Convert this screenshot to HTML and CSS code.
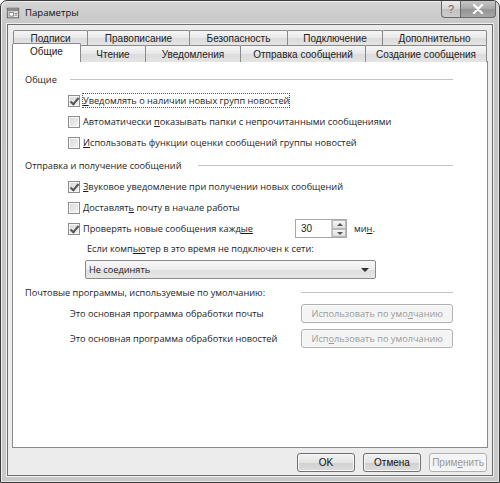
FILE: index.html
```html
<!DOCTYPE html>
<html lang="ru">
<head>
<meta charset="utf-8">
<title>Параметры</title>
<link rel="stylesheet" href="styles.css">
</head>
<body>
<div class="window">
  <div class="titlebar">
    <svg class="app-icon" width="14" height="14" viewBox="0 0 16 16">
      <rect x="1.5" y="2.5" width="13" height="11" fill="#e8e8e8" stroke="#555"/>
      <rect x="2" y="3" width="12" height="3" fill="#8a8a8a"/>
      <rect x="3.5" y="7.5" width="5" height="4" fill="#fff" stroke="#777"/>
      <rect x="10" y="8" width="3" height="1" fill="#777"/>
      <rect x="10" y="10" width="3" height="1" fill="#777"/>
    </svg>
    <span class="title">Параметры</span>
    <div class="caption-btns">
      <span class="cap-btn help">?</span>
      <span class="cap-btn close">
        <svg width="12" height="10" viewBox="0 0 12 10"><path d="M2 1 L10 9 M10 1 L2 9" stroke="#fff" stroke-width="2.4" stroke-linecap="round"/></svg>
      </span>
    </div>
  </div>
  <div class="client">
    <div class="tabs">
      <div class="tab-row row-back">
        <span class="tab">Подписи</span>
        <span class="tab">Правописание</span>
        <span class="tab">Безопасность</span>
        <span class="tab">Подключение</span>
        <span class="tab">Дополнительно</span>
      </div>
      <div class="tab-row row-front">
        <span class="tab active">Общие</span>
        <span class="tab">Чтение</span>
        <span class="tab">Уведомления</span>
        <span class="tab">Отправка сообщений</span>
        <span class="tab">Создание сообщения</span>
      </div>
    </div>
    <div class="panel">
      <div class="group-head h1"><span>Общие</span><i class="rule"></i></div>
      <div class="check-row"><span class="cb checked"></span><span class="focus"><u>У</u>ведомлять о наличии новых групп новостей</span></div>
      <div class="check-row"><span class="cb"></span><span>Автоматически <u>п</u>оказывать папки с непрочитанными сообщениями</span></div>
      <div class="check-row"><span class="cb"></span><span><u>И</u>спользовать функции оценки сообщений группы новостей</span></div>

      <div class="group-head h2"><span>Отправка и получение сообщений</span><i class="rule"></i></div>
      <div class="check-row"><span class="cb checked"></span><span><u>З</u>вуковое уведомление при получении новых сообщений</span></div>
      <div class="check-row"><span class="cb"></span><span>Доставлят<u>ь</u> почту в начале работы</span></div>
      <div class="check-row spin-row">
        <span class="cb checked"></span><span class="spin-label">Проверять новые сообщения кажд<u>ые</u></span>
        <span class="spin"><span class="spin-val">30</span><span class="spin-arrows"><span class="arr up"></span><span class="arr down"></span></span></span>
        <span class="unit">ми<u>н</u>.</span>
      </div>
      <div class="sub-label">Если комп<u>ью</u>тер в это время не подключен к сети:</div>
      <div class="select"><span>Не соединять</span><span class="caret"></span></div>

      <div class="group-head h3"><span>Почтовые программы, используемые по умолчанию:</span><i class="rule"></i></div>
      <div class="default-row r1"><span class="dlabel">Это основная программа обработки почты</span><span class="btn disabled">Использовать по умо<u>л</u>чанию</span></div>
      <div class="default-row r2"><span class="dlabel">Это основная программа обработки новостей</span><span class="btn disabled">Исп<u>о</u>льзовать по умолчанию</span></div>
    </div>
    <div class="footer">
      <span class="btn">OK</span>
      <span class="btn">Отмена</span>
      <span class="btn disabled">Прим<u>е</u>нить</span>
    </div>
  </div>
</div>
</body>
</html>
```
FILE: styles.css
```css
* { box-sizing: border-box; }
html, body { margin: 0; padding: 0; background: #fff; }
body { width: 500px; height: 483px; overflow: hidden; font-family: "Open Sans", "Noto Sans", sans-serif; color: #1c1c1c; }

.window {
  width: 500px; height: 483px;
  border: 1px solid #3c3c3c;
  border-radius: 7px 7px 0 0;
  background: linear-gradient(#d4d4d4, #c4c4c4 30px, #c9c9c9);
  padding: 0 6px 6px 6px;
  display: flex; flex-direction: column;
  box-shadow: inset 1px 1px 0 #eee, inset -1px -1px 0 #e6e6e6;
}

.titlebar {
  height: 23px; display: flex; align-items: center; position: relative;
}
.app-icon { margin-left: -1px; margin-right: 5px; }
.title { font-size: 9.6px; color: #111; }
.caption-btns { margin-left: auto; display: flex; align-self: flex-start; margin-right: -3px; }
.cap-btn {
  height: 17px; display: flex; align-items: center; justify-content: center;
  border: 1px solid #6a6a6a; border-top: none;
  background: linear-gradient(#ececec, #d4d4d4 50%, #c2c2c2 51%, #cccccc);
  font-family: "Liberation Sans", sans-serif; font-size: 11px; color: #666;
}
.cap-btn.help { width: 19px; border-radius: 0 0 0 4px; border-right: none; }
.cap-btn.close { width: 36px; border-radius: 0 0 4px 0; background: linear-gradient(#c6c6c6, #a8a8a8 50%, #949494 51%, #a6a6a6); }

.client {
  flex: 1;
  background: #ececec;
  border: 1px solid #6e6e6e;
  box-shadow: 0 0 0 1px #efefef;
  padding: 5px 4px 0 4px;
  display: flex; flex-direction: column;
}

.tab-row { display: grid; height: 15px; }
.row-back { grid-template-columns: 75px 102px 98px 95px 104px; margin-left: 1px; margin-right: 1px; }
.row-front { grid-template-columns: 69px 65px 95px 125px 121px; margin-right: 1px; height: 16px; position: relative; }
.tab {
  font-family: "Liberation Sans", sans-serif; font-size: 10px; color: #222;
  display: flex; align-items: center; justify-content: center;
  border: 1px solid #8a8a8a; border-bottom: none; margin-left: -1px;
  background: linear-gradient(#f6f6f6, #e8e8e8 50%, #dcdcdc 51%, #e4e4e4);
  border-radius: 2px 2px 0 0;
  white-space: nowrap;
}
.tab:first-child { margin-left: 0; }
.row-back .tab { padding-top: 1px; }
.tab.active {
  background: #fff; margin-top: -2px; height: 19px; position: relative; z-index: 2;
  margin-left: 0; padding-bottom: 3px;
}

.panel {
  height: 387px;
  background: #fff;
  border: 1px solid #8a8a8a;
  padding: 0 34px 0 12px;
  display: flex; flex-direction: column;
  font-size: 9.2px;
}

.group-head { display: flex; align-items: center; height: 21px; white-space: nowrap; }
.group-head .rule { flex: 1; border-top: 1px solid #c4c4c4; margin-left: 12px; height: 0; }
.h1 { margin-top: 7px; }
.h1 .rule { margin-left: 13px; }
.h2 { margin-top: 2px; }
.h2 .rule { margin-left: 17px; }
.h3 { margin-top: 3px; }
.h3 .rule { margin-left: 36px; }

.check-row { display: flex; align-items: center; height: 21px; padding-left: 43px; white-space: nowrap; }
.cb {
  width: 12px; height: 12px; flex: none; margin-right: 3px;
  border: 1px solid #8e8e8e;
  background: linear-gradient(135deg, #d8d8d8, #f4f4f4);
  box-shadow: inset 0 0 0 1px #f8f8f8;
  position: relative;
}
.cb.checked::after {
  content: ""; position: absolute; left: 3px; top: 0px; width: 3px; height: 7px;
  border: solid #555; border-width: 0 2px 2px 0; transform: rotate(40deg);
}
.focus { outline: 1px dotted #555; outline-offset: 0; }

.spin-label { width: 212px; }
.spin { display: flex; height: 19px; width: 52px; border: 1px solid #a8a8a8; background: #fff; }
.spin-val { flex: 1; padding-left: 5px; line-height: 17px; font-family: "Liberation Sans Narrow", "Liberation Sans", sans-serif; font-size: 10px; }
.spin-arrows { width: 15px; display: flex; flex-direction: column; border-left: 1px solid #ccc; }
.arr {
  flex: 1; border: 1px solid #b8b8b8; background: linear-gradient(#f6f6f6, #dedede);
  position: relative;
}
.arr::after { content: ""; position: absolute; left: 4px; border-left: 3px solid transparent; border-right: 3px solid transparent; }
.arr.up::after { top: 2px; border-bottom: 3px solid #555; }
.arr.down::after { top: 2px; border-top: 3px solid #555; }
.unit { margin-left: 7px; }

.sub-label { height: 20px; line-height: 20px; padding-left: 62px; white-space: nowrap; }
.select {
  margin-left: 60px; width: 291px; height: 19px; margin-top: 1px;
  border: 1px solid #8a8a8a; border-radius: 2px;
  background: linear-gradient(#f8f8f8, #ececec 50%, #dedede 51%, #e6e6e6);
  display: flex; align-items: center; padding-left: 3px;
}
.select .caret { margin-left: auto; margin-right: 6px; border-left: 4px solid transparent; border-right: 4px solid transparent; border-top: 4px solid #333; }

.default-row { display: flex; align-items: center; height: 20px; padding-left: 45px; white-space: nowrap; }
.default-row.r1 { margin-top: 0; }
.default-row.r2 { margin-top: 5px; }
.dlabel { width: 232px; }

.btn {
  display: flex; align-items: center; justify-content: center;
  border: 1px solid #707070; border-radius: 3px;
  background: linear-gradient(#f2f2f2, #e4e4e4 50%, #d0d0d0 51%, #dcdcdc);
  box-shadow: inset 0 0 0 1px #f8f8f8;
  font-size: 9.2px; color: #111; height: 19px;
}
.btn.disabled { border-color: #b0b0b0; background: #f4f4f4; color: #9a9a9a; }
.default-row .btn { width: 152px; }

.footer { display: flex; justify-content: flex-end; gap: 8px; padding-top: 5px; padding-right: 1px; }
.footer .btn { width: 58px; font-family: "Liberation Sans", sans-serif; font-size: 10px; }
```
